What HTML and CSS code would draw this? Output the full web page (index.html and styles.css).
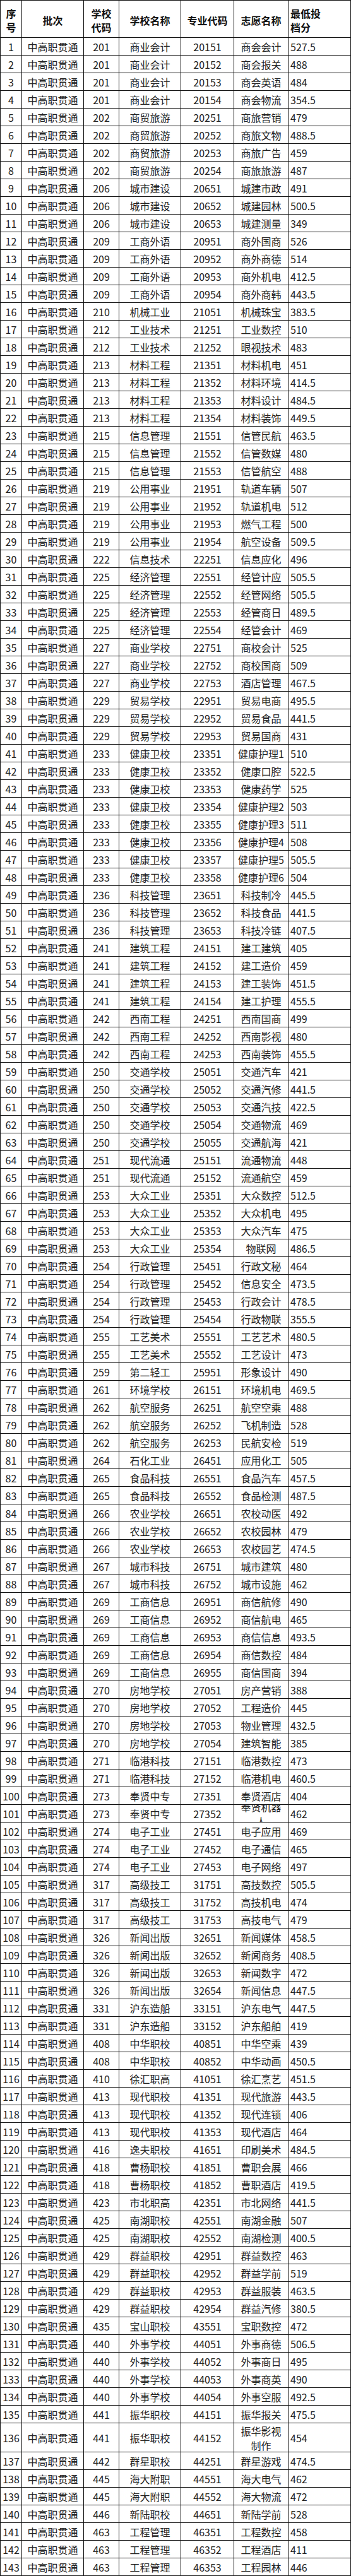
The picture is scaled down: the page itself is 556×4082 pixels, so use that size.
FILE: index.html
```html
<!DOCTYPE html>
<html lang="zh-CN">
<head>
<meta charset="utf-8">
<title>中高职贯通 最低投档分</title>
<link rel="stylesheet" href="styles.css">
</head>
<body>
<table class="scores">
<thead>
<tr><th><span>序<br>号</span></th><th><span>批次</span></th><th><span>学校<br>代码</span></th><th><span>学校名称</span></th><th><span>专业代码</span></th><th><span>志愿名称</span></th><th><span>最低投<br>档分</span></th></tr>
</thead>
<tbody>
<tr><td>1</td><td>中高职贯通</td><td>201</td><td>商业会计</td><td>20151</td><td>商会会计</td><td>527.5</td></tr>
<tr><td>2</td><td>中高职贯通</td><td>201</td><td>商业会计</td><td>20152</td><td>商会报关</td><td>488</td></tr>
<tr><td>3</td><td>中高职贯通</td><td>201</td><td>商业会计</td><td>20153</td><td>商会英语</td><td>484</td></tr>
<tr><td>4</td><td>中高职贯通</td><td>201</td><td>商业会计</td><td>20154</td><td>商会物流</td><td>354.5</td></tr>
<tr><td>5</td><td>中高职贯通</td><td>202</td><td>商贸旅游</td><td>20251</td><td>商旅营销</td><td>479</td></tr>
<tr><td>6</td><td>中高职贯通</td><td>202</td><td>商贸旅游</td><td>20252</td><td>商旅文物</td><td>488.5</td></tr>
<tr><td>7</td><td>中高职贯通</td><td>202</td><td>商贸旅游</td><td>20253</td><td>商旅广告</td><td>459</td></tr>
<tr><td>8</td><td>中高职贯通</td><td>202</td><td>商贸旅游</td><td>20254</td><td>商旅旅游</td><td>487</td></tr>
<tr><td>9</td><td>中高职贯通</td><td>206</td><td>城市建设</td><td>20651</td><td>城建市政</td><td>491</td></tr>
<tr><td>10</td><td>中高职贯通</td><td>206</td><td>城市建设</td><td>20652</td><td>城建园林</td><td>500.5</td></tr>
<tr><td>11</td><td>中高职贯通</td><td>206</td><td>城市建设</td><td>20653</td><td>城建测量</td><td>349</td></tr>
<tr><td>12</td><td>中高职贯通</td><td>209</td><td>工商外语</td><td>20951</td><td>商外国商</td><td>526</td></tr>
<tr><td>13</td><td>中高职贯通</td><td>209</td><td>工商外语</td><td>20952</td><td>商外商德</td><td>514</td></tr>
<tr><td>14</td><td>中高职贯通</td><td>209</td><td>工商外语</td><td>20953</td><td>商外机电</td><td>412.5</td></tr>
<tr><td>15</td><td>中高职贯通</td><td>209</td><td>工商外语</td><td>20954</td><td>商外商韩</td><td>443.5</td></tr>
<tr><td>16</td><td>中高职贯通</td><td>210</td><td>机械工业</td><td>21051</td><td>机械珠宝</td><td>383.5</td></tr>
<tr><td>17</td><td>中高职贯通</td><td>212</td><td>工业技术</td><td>21251</td><td>工业数控</td><td>510</td></tr>
<tr><td>18</td><td>中高职贯通</td><td>212</td><td>工业技术</td><td>21252</td><td>眼视技术</td><td>483</td></tr>
<tr><td>19</td><td>中高职贯通</td><td>213</td><td>材料工程</td><td>21351</td><td>材料机电</td><td>451</td></tr>
<tr><td>20</td><td>中高职贯通</td><td>213</td><td>材料工程</td><td>21352</td><td>材料环境</td><td>414.5</td></tr>
<tr><td>21</td><td>中高职贯通</td><td>213</td><td>材料工程</td><td>21353</td><td>材料设计</td><td>484.5</td></tr>
<tr><td>22</td><td>中高职贯通</td><td>213</td><td>材料工程</td><td>21354</td><td>材料装饰</td><td>449.5</td></tr>
<tr><td>23</td><td>中高职贯通</td><td>215</td><td>信息管理</td><td>21551</td><td>信管民航</td><td>463.5</td></tr>
<tr><td>24</td><td>中高职贯通</td><td>215</td><td>信息管理</td><td>21552</td><td>信管数媒</td><td>480</td></tr>
<tr><td>25</td><td>中高职贯通</td><td>215</td><td>信息管理</td><td>21553</td><td>信管航空</td><td>488</td></tr>
<tr><td>26</td><td>中高职贯通</td><td>219</td><td>公用事业</td><td>21951</td><td>轨道车辆</td><td>507</td></tr>
<tr><td>27</td><td>中高职贯通</td><td>219</td><td>公用事业</td><td>21952</td><td>轨道机电</td><td>512</td></tr>
<tr><td>28</td><td>中高职贯通</td><td>219</td><td>公用事业</td><td>21953</td><td>燃气工程</td><td>500</td></tr>
<tr><td>29</td><td>中高职贯通</td><td>219</td><td>公用事业</td><td>21954</td><td>航空设备</td><td>509.5</td></tr>
<tr><td>30</td><td>中高职贯通</td><td>222</td><td>信息技术</td><td>22251</td><td>信息应化</td><td>496</td></tr>
<tr><td>31</td><td>中高职贯通</td><td>225</td><td>经济管理</td><td>22551</td><td>经管计应</td><td>505.5</td></tr>
<tr><td>32</td><td>中高职贯通</td><td>225</td><td>经济管理</td><td>22552</td><td>经管网络</td><td>505.5</td></tr>
<tr><td>33</td><td>中高职贯通</td><td>225</td><td>经济管理</td><td>22553</td><td>经管商日</td><td>489.5</td></tr>
<tr><td>34</td><td>中高职贯通</td><td>225</td><td>经济管理</td><td>22554</td><td>经管会计</td><td>469</td></tr>
<tr><td>35</td><td>中高职贯通</td><td>227</td><td>商业学校</td><td>22751</td><td>商校会计</td><td>525</td></tr>
<tr><td>36</td><td>中高职贯通</td><td>227</td><td>商业学校</td><td>22752</td><td>商校国商</td><td>509</td></tr>
<tr><td>37</td><td>中高职贯通</td><td>227</td><td>商业学校</td><td>22753</td><td>酒店管理</td><td>467.5</td></tr>
<tr><td>38</td><td>中高职贯通</td><td>229</td><td>贸易学校</td><td>22951</td><td>贸易电商</td><td>495.5</td></tr>
<tr><td>39</td><td>中高职贯通</td><td>229</td><td>贸易学校</td><td>22952</td><td>贸易食品</td><td>441.5</td></tr>
<tr><td>40</td><td>中高职贯通</td><td>229</td><td>贸易学校</td><td>22953</td><td>贸易国商</td><td>431</td></tr>
<tr><td>41</td><td>中高职贯通</td><td>233</td><td>健康卫校</td><td>23351</td><td>健康护理1</td><td>510</td></tr>
<tr><td>42</td><td>中高职贯通</td><td>233</td><td>健康卫校</td><td>23352</td><td>健康口腔</td><td>522.5</td></tr>
<tr><td>43</td><td>中高职贯通</td><td>233</td><td>健康卫校</td><td>23353</td><td>健康药学</td><td>525</td></tr>
<tr><td>44</td><td>中高职贯通</td><td>233</td><td>健康卫校</td><td>23354</td><td>健康护理2</td><td>503</td></tr>
<tr><td>45</td><td>中高职贯通</td><td>233</td><td>健康卫校</td><td>23355</td><td>健康护理3</td><td>511</td></tr>
<tr><td>46</td><td>中高职贯通</td><td>233</td><td>健康卫校</td><td>23356</td><td>健康护理4</td><td>508</td></tr>
<tr><td>47</td><td>中高职贯通</td><td>233</td><td>健康卫校</td><td>23357</td><td>健康护理5</td><td>505.5</td></tr>
<tr><td>48</td><td>中高职贯通</td><td>233</td><td>健康卫校</td><td>23358</td><td>健康护理6</td><td>504</td></tr>
<tr><td>49</td><td>中高职贯通</td><td>236</td><td>科技管理</td><td>23651</td><td>科技制冷</td><td>445.5</td></tr>
<tr><td>50</td><td>中高职贯通</td><td>236</td><td>科技管理</td><td>23652</td><td>科技食品</td><td>441.5</td></tr>
<tr><td>51</td><td>中高职贯通</td><td>236</td><td>科技管理</td><td>23653</td><td>科技冷链</td><td>407.5</td></tr>
<tr><td>52</td><td>中高职贯通</td><td>241</td><td>建筑工程</td><td>24151</td><td>建工建筑</td><td>405</td></tr>
<tr><td>53</td><td>中高职贯通</td><td>241</td><td>建筑工程</td><td>24152</td><td>建工造价</td><td>459</td></tr>
<tr><td>54</td><td>中高职贯通</td><td>241</td><td>建筑工程</td><td>24153</td><td>建工装饰</td><td>451.5</td></tr>
<tr><td>55</td><td>中高职贯通</td><td>241</td><td>建筑工程</td><td>24154</td><td>建工护理</td><td>455.5</td></tr>
<tr><td>56</td><td>中高职贯通</td><td>242</td><td>西南工程</td><td>24251</td><td>西南国商</td><td>499</td></tr>
<tr><td>57</td><td>中高职贯通</td><td>242</td><td>西南工程</td><td>24252</td><td>西南影视</td><td>480</td></tr>
<tr><td>58</td><td>中高职贯通</td><td>242</td><td>西南工程</td><td>24253</td><td>西南装饰</td><td>455.5</td></tr>
<tr><td>59</td><td>中高职贯通</td><td>250</td><td>交通学校</td><td>25051</td><td>交通汽车</td><td>421</td></tr>
<tr><td>60</td><td>中高职贯通</td><td>250</td><td>交通学校</td><td>25052</td><td>交通汽修</td><td>441.5</td></tr>
<tr><td>61</td><td>中高职贯通</td><td>250</td><td>交通学校</td><td>25053</td><td>交通汽技</td><td>422.5</td></tr>
<tr><td>62</td><td>中高职贯通</td><td>250</td><td>交通学校</td><td>25054</td><td>交通物流</td><td>469</td></tr>
<tr><td>63</td><td>中高职贯通</td><td>250</td><td>交通学校</td><td>25055</td><td>交通航海</td><td>421</td></tr>
<tr><td>64</td><td>中高职贯通</td><td>251</td><td>现代流通</td><td>25151</td><td>流通物流</td><td>448</td></tr>
<tr><td>65</td><td>中高职贯通</td><td>251</td><td>现代流通</td><td>25152</td><td>流通航空</td><td>459</td></tr>
<tr><td>66</td><td>中高职贯通</td><td>253</td><td>大众工业</td><td>25351</td><td>大众数控</td><td>512.5</td></tr>
<tr><td>67</td><td>中高职贯通</td><td>253</td><td>大众工业</td><td>25352</td><td>大众机电</td><td>495</td></tr>
<tr><td>68</td><td>中高职贯通</td><td>253</td><td>大众工业</td><td>25353</td><td>大众汽车</td><td>475</td></tr>
<tr><td>69</td><td>中高职贯通</td><td>253</td><td>大众工业</td><td>25354</td><td>物联网</td><td>486.5</td></tr>
<tr><td>70</td><td>中高职贯通</td><td>254</td><td>行政管理</td><td>25451</td><td>行政文秘</td><td>464</td></tr>
<tr><td>71</td><td>中高职贯通</td><td>254</td><td>行政管理</td><td>25452</td><td>信息安全</td><td>473.5</td></tr>
<tr><td>72</td><td>中高职贯通</td><td>254</td><td>行政管理</td><td>25453</td><td>行政会计</td><td>478.5</td></tr>
<tr><td>73</td><td>中高职贯通</td><td>254</td><td>行政管理</td><td>25454</td><td>行政物联</td><td>355.5</td></tr>
<tr><td>74</td><td>中高职贯通</td><td>255</td><td>工艺美术</td><td>25551</td><td>工艺艺术</td><td>480.5</td></tr>
<tr><td>75</td><td>中高职贯通</td><td>255</td><td>工艺美术</td><td>25552</td><td>工艺设计</td><td>473</td></tr>
<tr><td>76</td><td>中高职贯通</td><td>259</td><td>第二轻工</td><td>25951</td><td>形象设计</td><td>490</td></tr>
<tr><td>77</td><td>中高职贯通</td><td>261</td><td>环境学校</td><td>26151</td><td>环境机电</td><td>469.5</td></tr>
<tr><td>78</td><td>中高职贯通</td><td>262</td><td>航空服务</td><td>26251</td><td>航空空乘</td><td>488</td></tr>
<tr><td>79</td><td>中高职贯通</td><td>262</td><td>航空服务</td><td>26252</td><td>飞机制造</td><td>528</td></tr>
<tr><td>80</td><td>中高职贯通</td><td>262</td><td>航空服务</td><td>26253</td><td>民航安检</td><td>519</td></tr>
<tr><td>81</td><td>中高职贯通</td><td>264</td><td>石化工业</td><td>26451</td><td>应用化工</td><td>505</td></tr>
<tr><td>82</td><td>中高职贯通</td><td>265</td><td>食品科技</td><td>26551</td><td>食品汽车</td><td>457.5</td></tr>
<tr><td>83</td><td>中高职贯通</td><td>265</td><td>食品科技</td><td>26552</td><td>食品检测</td><td>487.5</td></tr>
<tr><td>84</td><td>中高职贯通</td><td>266</td><td>农业学校</td><td>26651</td><td>农校动医</td><td>492</td></tr>
<tr><td>85</td><td>中高职贯通</td><td>266</td><td>农业学校</td><td>26652</td><td>农校园林</td><td>479</td></tr>
<tr><td>86</td><td>中高职贯通</td><td>266</td><td>农业学校</td><td>26653</td><td>农校园艺</td><td>474.5</td></tr>
<tr><td>87</td><td>中高职贯通</td><td>267</td><td>城市科技</td><td>26751</td><td>城市建筑</td><td>480</td></tr>
<tr><td>88</td><td>中高职贯通</td><td>267</td><td>城市科技</td><td>26752</td><td>城市设施</td><td>462</td></tr>
<tr><td>89</td><td>中高职贯通</td><td>269</td><td>工商信息</td><td>26951</td><td>商信航修</td><td>490</td></tr>
<tr><td>90</td><td>中高职贯通</td><td>269</td><td>工商信息</td><td>26952</td><td>商信航电</td><td>465</td></tr>
<tr><td>91</td><td>中高职贯通</td><td>269</td><td>工商信息</td><td>26953</td><td>商信信息</td><td>493.5</td></tr>
<tr><td>92</td><td>中高职贯通</td><td>269</td><td>工商信息</td><td>26954</td><td>商信数控</td><td>484</td></tr>
<tr><td>93</td><td>中高职贯通</td><td>269</td><td>工商信息</td><td>26955</td><td>商信国商</td><td>394</td></tr>
<tr><td>94</td><td>中高职贯通</td><td>270</td><td>房地学校</td><td>27051</td><td>房产营销</td><td>388</td></tr>
<tr><td>95</td><td>中高职贯通</td><td>270</td><td>房地学校</td><td>27052</td><td>工程造价</td><td>445</td></tr>
<tr><td>96</td><td>中高职贯通</td><td>270</td><td>房地学校</td><td>27053</td><td>物业管理</td><td>432.5</td></tr>
<tr><td>97</td><td>中高职贯通</td><td>270</td><td>房地学校</td><td>27054</td><td>建筑智能</td><td>385</td></tr>
<tr><td>98</td><td>中高职贯通</td><td>271</td><td>临港科技</td><td>27151</td><td>临港数控</td><td>473</td></tr>
<tr><td>99</td><td>中高职贯通</td><td>271</td><td>临港科技</td><td>27152</td><td>临港机电</td><td>460.5</td></tr>
<tr><td>100</td><td>中高职贯通</td><td>273</td><td>奉贤中专</td><td>27351</td><td>奉贤酒店</td><td>404</td></tr>
<tr><td>101</td><td>中高职贯通</td><td>273</td><td>奉贤中专</td><td>27352</td><td>奉贤机器人</td><td>462</td></tr>
<tr><td>102</td><td>中高职贯通</td><td>274</td><td>电子工业</td><td>27451</td><td>电子应用</td><td>469</td></tr>
<tr><td>103</td><td>中高职贯通</td><td>274</td><td>电子工业</td><td>27452</td><td>电子通信</td><td>465</td></tr>
<tr><td>104</td><td>中高职贯通</td><td>274</td><td>电子工业</td><td>27453</td><td>电子网络</td><td>497</td></tr>
<tr><td>105</td><td>中高职贯通</td><td>317</td><td>高级技工</td><td>31751</td><td>高技数控</td><td>505.5</td></tr>
<tr><td>106</td><td>中高职贯通</td><td>317</td><td>高级技工</td><td>31752</td><td>高技机电</td><td>474</td></tr>
<tr><td>107</td><td>中高职贯通</td><td>317</td><td>高级技工</td><td>31753</td><td>高技电气</td><td>479</td></tr>
<tr><td>108</td><td>中高职贯通</td><td>326</td><td>新闻出版</td><td>32651</td><td>新闻媒体</td><td>458.5</td></tr>
<tr><td>109</td><td>中高职贯通</td><td>326</td><td>新闻出版</td><td>32652</td><td>新闻商务</td><td>408.5</td></tr>
<tr><td>110</td><td>中高职贯通</td><td>326</td><td>新闻出版</td><td>32653</td><td>新闻数字</td><td>472</td></tr>
<tr><td>111</td><td>中高职贯通</td><td>326</td><td>新闻出版</td><td>32654</td><td>新闻信息</td><td>447.5</td></tr>
<tr><td>112</td><td>中高职贯通</td><td>331</td><td>沪东造船</td><td>33151</td><td>沪东电气</td><td>447.5</td></tr>
<tr><td>113</td><td>中高职贯通</td><td>331</td><td>沪东造船</td><td>33152</td><td>沪东船舶</td><td>419</td></tr>
<tr><td>114</td><td>中高职贯通</td><td>408</td><td>中华职校</td><td>40851</td><td>中华空乘</td><td>439</td></tr>
<tr><td>115</td><td>中高职贯通</td><td>408</td><td>中华职校</td><td>40852</td><td>中华动画</td><td>450.5</td></tr>
<tr><td>116</td><td>中高职贯通</td><td>410</td><td>徐汇职高</td><td>41051</td><td>徐汇烹艺</td><td>451.5</td></tr>
<tr><td>117</td><td>中高职贯通</td><td>413</td><td>现代职校</td><td>41351</td><td>现代旅游</td><td>443.5</td></tr>
<tr><td>118</td><td>中高职贯通</td><td>413</td><td>现代职校</td><td>41352</td><td>现代连锁</td><td>406</td></tr>
<tr><td>119</td><td>中高职贯通</td><td>413</td><td>现代职校</td><td>41353</td><td>现代酒店</td><td>464</td></tr>
<tr><td>120</td><td>中高职贯通</td><td>416</td><td>逸夫职校</td><td>41651</td><td>印刷美术</td><td>484.5</td></tr>
<tr><td>121</td><td>中高职贯通</td><td>418</td><td>曹杨职校</td><td>41851</td><td>曹职会展</td><td>466</td></tr>
<tr><td>122</td><td>中高职贯通</td><td>418</td><td>曹杨职校</td><td>41852</td><td>曹职酒店</td><td>419.5</td></tr>
<tr><td>123</td><td>中高职贯通</td><td>423</td><td>市北职高</td><td>42351</td><td>市北网络</td><td>441.5</td></tr>
<tr><td>124</td><td>中高职贯通</td><td>425</td><td>南湖职校</td><td>42551</td><td>南湖金融</td><td>507</td></tr>
<tr><td>125</td><td>中高职贯通</td><td>425</td><td>南湖职校</td><td>42552</td><td>南湖检测</td><td>400.5</td></tr>
<tr><td>126</td><td>中高职贯通</td><td>429</td><td>群益职校</td><td>42951</td><td>群益数控</td><td>463</td></tr>
<tr><td>127</td><td>中高职贯通</td><td>429</td><td>群益职校</td><td>42952</td><td>群益学前</td><td>519</td></tr>
<tr><td>128</td><td>中高职贯通</td><td>429</td><td>群益职校</td><td>42953</td><td>群益服装</td><td>463.5</td></tr>
<tr><td>129</td><td>中高职贯通</td><td>429</td><td>群益职校</td><td>42954</td><td>群益汽修</td><td>380.5</td></tr>
<tr><td>130</td><td>中高职贯通</td><td>435</td><td>宝山职校</td><td>43551</td><td>宝职数控</td><td>472</td></tr>
<tr><td>131</td><td>中高职贯通</td><td>440</td><td>外事学校</td><td>44051</td><td>外事商德</td><td>506.5</td></tr>
<tr><td>132</td><td>中高职贯通</td><td>440</td><td>外事学校</td><td>44052</td><td>外事商日</td><td>495</td></tr>
<tr><td>133</td><td>中高职贯通</td><td>440</td><td>外事学校</td><td>44053</td><td>外事商英</td><td>490</td></tr>
<tr><td>134</td><td>中高职贯通</td><td>440</td><td>外事学校</td><td>44054</td><td>外事空服</td><td>492.5</td></tr>
<tr><td>135</td><td>中高职贯通</td><td>441</td><td>振华职校</td><td>44151</td><td>振华报关</td><td>475.5</td></tr>
<tr><td>136</td><td>中高职贯通</td><td>441</td><td>振华职校</td><td>44152</td><td>振华影视制作</td><td>454</td></tr>
<tr><td>137</td><td>中高职贯通</td><td>442</td><td>群星职校</td><td>44251</td><td>群星游戏</td><td>474.5</td></tr>
<tr><td>138</td><td>中高职贯通</td><td>445</td><td>海大附职</td><td>44551</td><td>海大电气</td><td>462</td></tr>
<tr><td>139</td><td>中高职贯通</td><td>445</td><td>海大附职</td><td>44552</td><td>海大物流</td><td>472</td></tr>
<tr><td>140</td><td>中高职贯通</td><td>446</td><td>新陆职校</td><td>44651</td><td>新陆学前</td><td>528</td></tr>
<tr><td>141</td><td>中高职贯通</td><td>463</td><td>工程管理</td><td>46351</td><td>工程数控</td><td>458</td></tr>
<tr><td>142</td><td>中高职贯通</td><td>463</td><td>工程管理</td><td>46352</td><td>工程酒店</td><td>411</td></tr>
<tr><td>143</td><td>中高职贯通</td><td>463</td><td>工程管理</td><td>46353</td><td>工程园林</td><td>446</td></tr>
</tbody>
</table>
</body>
</html>
```
FILE: styles.css
```css
html, body {
  margin: 0;
  padding: 0;
  background: #fff;
}

body {
  font-family: "Microsoft YaHei", "Noto Sans CJK SC", "Noto Sans", sans-serif;
  font-size: 16px;
  color: #222;
}

.scores {
  display: grid;
  box-sizing: border-box;
  width: 556px;
  grid-template-columns: 33px 97px 55px 97px 83px 85px 98px;
  grid-template-rows: 58px repeat(135, 27px) 45px repeat(7, 27px);
  gap: 1px;
  padding: 1px;
  background: #111;
  border-spacing: 0;
}

.scores thead,
.scores tbody,
.scores tr {
  display: contents;
}

.scores th,
.scores td {
  display: flex;
  align-items: center;
  justify-content: center;
  text-align: center;
  background: #fff;
  padding: 2px 0 0;
  overflow: hidden;
  line-height: 23px;
  font-weight: 400;
  white-space: normal;
}

.scores th {
  padding-top: 4px;
  font-weight: 700;
  color: #111;
  line-height: 22px;
}

.scores td:nth-child(6) {
  padding-left: 4px;
  padding-right: 4px;
}

.scores th:nth-child(7),
.scores td:nth-child(7) {
  justify-content: flex-start;
  text-align: left;
  padding-left: 3px;
}
```
